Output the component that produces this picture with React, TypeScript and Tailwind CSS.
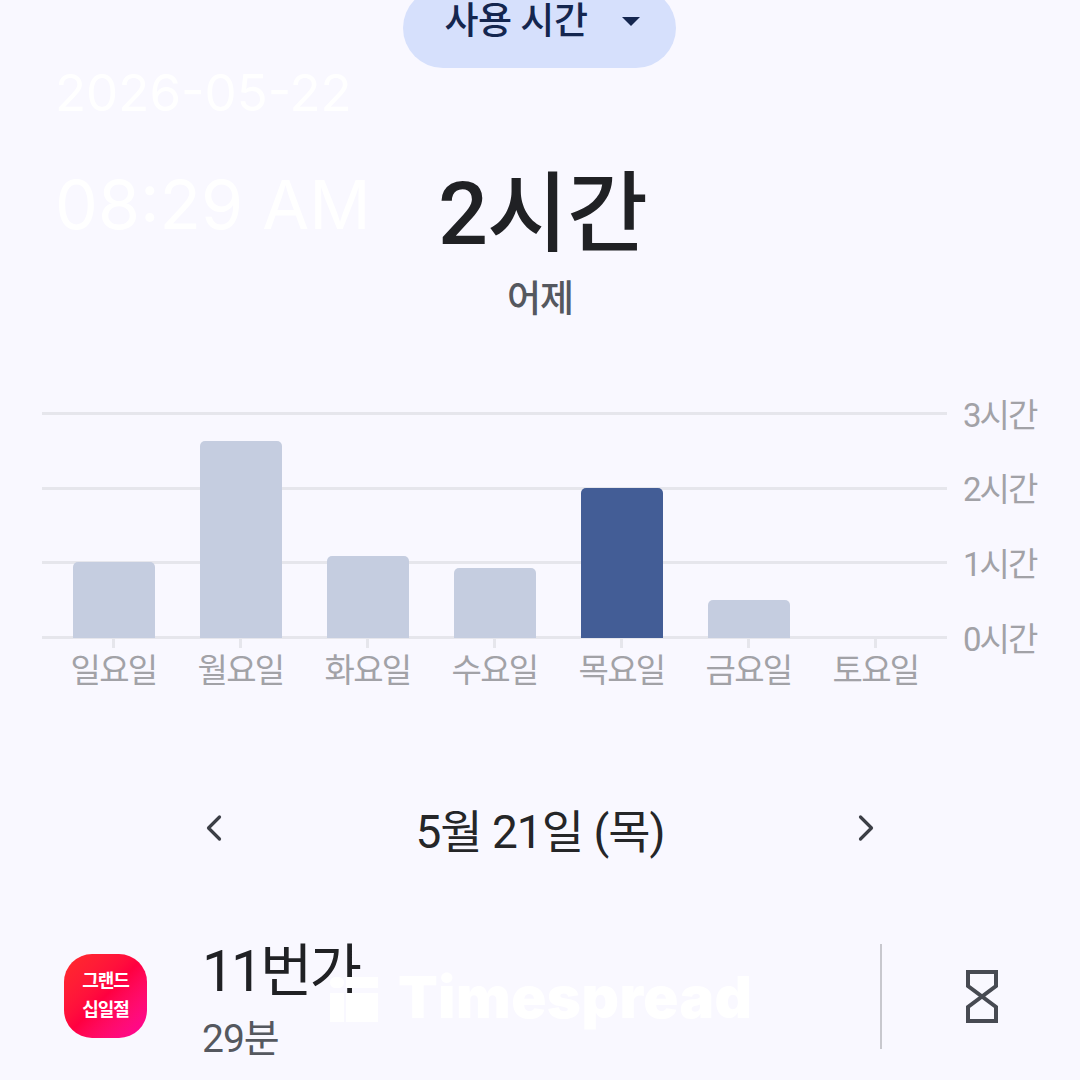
import { ChevronLeft, ChevronRight } from "lucide-react";

const font = "font-['Roboto','Noto_Sans_CJK_KR',sans-serif]";

const bars = [
  { day: "일요일", h: "h-[76px]", color: "bg-[#c5cde0]" },
  { day: "월요일", h: "h-[197px]", color: "bg-[#c5cde0]" },
  { day: "화요일", h: "h-[82px]", color: "bg-[#c5cde0]" },
  { day: "수요일", h: "h-[70px]", color: "bg-[#c5cde0]" },
  { day: "목요일", h: "h-[150px]", color: "bg-[#435d96]" },
  { day: "금요일", h: "h-[38px]", color: "bg-[#c5cde0]" },
  { day: "토요일", h: "h-0", color: "bg-[#c5cde0]" },
];

const ticks = ["3시간", "2시간", "1시간", "0시간"];

function Chart() {
  return (
    <div className="mt-[88px] flex self-stretch pl-[42px]">
      <div className="w-[905px]">
        <div className="relative flex h-[227px] flex-col justify-between">
          {ticks.map((t) => (
            <div key={t} className="h-[3px] bg-[#e6e6ec]" />
          ))}
          {/* bars sit over the grid lines */}
          <div className="absolute inset-x-2 bottom-[1px] grid grid-cols-7 items-end">
            {bars.map((b) => (
              <div key={b.day} className="flex justify-center">
                <div className={`w-[82px] rounded-t-[5px] ${b.h} ${b.color}`} />
              </div>
            ))}
          </div>
        </div>
        <div className="grid grid-cols-7 px-2">
          {bars.map((b) => (
            <div key={b.day} className="flex flex-col items-center">
              <div className="h-[9px] w-[3px] bg-[#e6e6ec]" />
              <span className="mt-[2px] text-[33px] leading-[42px] tracking-[-1.7px] text-[#a2a2a7]">{b.day}</span>
            </div>
          ))}
        </div>
      </div>
      <div className="mt-[2px] ml-4 flex h-[227px] w-[76px] flex-col justify-between">
        {ticks.map((t) => (
          <div key={t} className="flex h-[3px] items-center whitespace-nowrap text-[33px] tracking-[-2px] text-[#a2a2a7]">
            {t}
          </div>
        ))}
      </div>
    </div>
  );
}

function Hourglass() {
  return (
    <svg width="34" height="55" viewBox="0 0 34 55" fill="none" stroke="#474a52" strokeWidth="4">
      <path d="M3 3H31V17L3 38V52H31V38L3 17Z" />
    </svg>
  );
}

export default function App() {
  return (
    <div className={`relative flex h-[1080px] w-[1080px] flex-col items-center overflow-hidden bg-[#f9f8ff] ${font}`}>
      {/* Dropdown pill, cut off by the top edge */}
      <div className="mr-px -mt-3 flex h-20 w-[273px] shrink-0 items-center justify-center gap-[35px] rounded-[40px] bg-[#d6e0fc] pb-[12px] pl-[6px]">
        <span className="text-[37px] leading-[44px] font-medium tracking-[-0.5px] text-[#14264f]">사용 시간</span>
        <span className="-mt-[2px] h-0 w-0 border-x-[9px] border-t-[9px] border-x-transparent border-t-[#14264f]" />
      </div>

      <h1 className="mt-[96px] pl-[5px] text-[88px] leading-[100px] font-medium tracking-[-1px] text-[#202124]">2시간</h1>
      <p className="mt-3 text-[37px] leading-[48px] font-medium tracking-[-1px] text-[#55585f]">어제</p>

      <Chart />

      {/* Date switcher */}
      <div className="mt-[114px] flex w-[696px] items-center justify-between text-[#3c3f46]">
        <ChevronLeft size={44} strokeWidth={1.75} className="-mt-2" />
        <span className="text-[46px] leading-[52px] tracking-[-1px] text-[#252628]">5월 21일 (목)</span>
        <ChevronRight size={44} strokeWidth={1.75} className="-mt-2" />
      </div>

      {/* App row */}
      <div className="mt-[68px] flex self-stretch pl-16">
        <div className="mt-[28px] flex h-[84px] w-[83px] flex-col items-center justify-center rounded-[28px] bg-gradient-to-br from-[#ff2a2a] via-[#ff0040] to-[#ff0099] pb-[2px] text-[18px] leading-[29px] font-bold tracking-[-1px] text-white">
          <span>그랜드</span>
          <span>십일절</span>
        </div>
        <div className="ml-[55px] w-[678px] pt-[13px]">
          <p className="text-[57px] leading-[66px] tracking-[-3px] text-[#202124]">11번가</p>
          <p className="mt-[11px] text-[39px] leading-[46px] tracking-[-1px] text-[#55585f]">29분</p>
        </div>
        <div className="mt-[18px] h-[105px] w-[2px] bg-[#c8c8ce]" />
        <div className="ml-[83px] mt-[43px]">
          <Hourglass />
        </div>
      </div>

      {/* Watermarks on top of everything */}
      <div className="absolute left-[55px] top-[62px] font-['Inter',sans-serif] text-[51px] leading-[62px] font-normal text-white">
        2026-05-22
      </div>
      <div className="absolute left-[55px] top-[164px] font-['Inter',sans-serif] text-[68px] leading-[80px] font-normal text-white">
        08:29 AM
      </div>
      <div className="absolute left-[330px] top-[977px] flex items-start gap-[2px]">
        <div className="flex w-[14px] flex-col gap-[5px]">
          <div className="h-[11px] rounded-full bg-white" />
          <div className="h-[29px] bg-white" />
        </div>
        <div className="flex w-[32px] flex-col gap-[5px]">
          <div className="h-[11px] bg-white" />
          <div className="h-[29px] bg-white" />
        </div>
      </div>
      <div className="absolute left-[398px] top-[964px] font-['Inter',sans-serif] text-[58px] leading-[66px] font-black tracking-[0.5px] text-white">
        Timespread
      </div>
    </div>
  );
}
